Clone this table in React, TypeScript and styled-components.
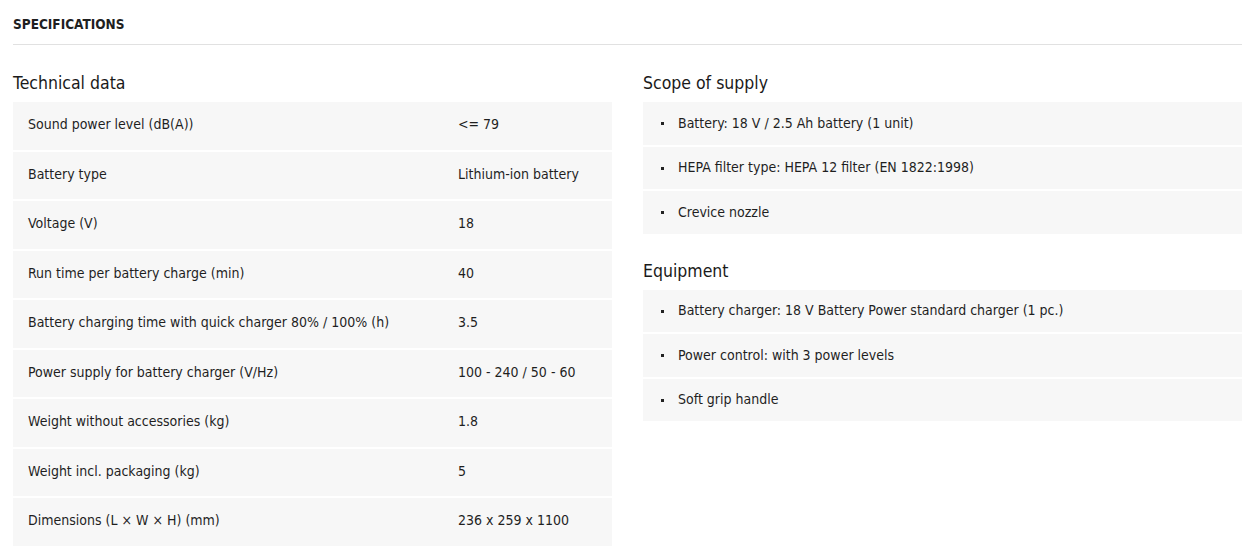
import React from "react";
import styled, { createGlobalStyle } from "styled-components";

const GlobalStyle = createGlobalStyle`
  body {
    margin: 0;
    background: #fff;
    font-family: "DejaVu Sans Condensed", "DejaVu Sans", sans-serif;
    color: #1f1f1f;
  }
`;

const Page = styled.div`
  padding: 0 10px 0 13px;
`;

const Header = styled.h1`
  margin: 0;
  height: 45px;
  display: flex;
  align-items: center;
  padding-top: 4px;
  box-sizing: border-box;
  font-size: 13.5px;
  font-weight: 700;
  border-bottom: 1px solid #e1e1e1;
`;

const Columns = styled.div`
  display: grid;
  grid-template-columns: 599px 599px;
  column-gap: 31px;
`;

const Column = styled.div`
  display: flex;
  flex-direction: column;
`;

const SectionTitle = styled.h2<{ $height?: number }>`
  margin: 0;
  height: ${(p) => p.$height ?? 57}px;
  display: flex;
  align-items: flex-end;
  padding-bottom: 9px;
  box-sizing: border-box;
  font-size: 17.5px;
  font-weight: 400;
  color: #1a1a1a;
`;

const Table = styled.div`
  display: flex;
  flex-direction: column;
`;

const Row = styled.div`
  display: grid;
  grid-template-columns: 430px 1fr;
  align-items: center;
  height: 47.5px;
  background: #f7f7f7;
  font-size: 14px;
  & + & {
    border-top: 2px solid #fff;
  }
`;

const Cell = styled.div`
  padding: 0 15px 3px;
`;

const List = styled.ul`
  list-style: none;
  margin: 0;
  padding: 0;
`;

const Item = styled.li`
  display: flex;
  align-items: center;
  height: 42.5px;
  padding-left: 18px;
  padding-bottom: 1px;
  box-sizing: border-box;
  background: #f7f7f7;
  font-size: 14px;
  & + & {
    border-top: 2px solid #fff;
    height: 44.5px;
  }
  &::before {
    content: "";
    width: 3px;
    height: 3px;
    background: #222;
    margin-right: 14px;
    margin-top: 2px;
  }
`;

const technical: [string, string][] = [
  ["Sound power level (dB(A))", "<= 79"],
  ["Battery type", "Lithium-ion battery"],
  ["Voltage (V)", "18"],
  ["Run time per battery charge (min)", "40"],
  ["Battery charging time with quick charger 80% / 100% (h)", "3.5"],
  ["Power supply for battery charger (V/Hz)", "100 - 240 / 50 - 60"],
  ["Weight without accessories (kg)", "1.8"],
  ["Weight incl. packaging (kg)", "5"],
  ["Dimensions (L × W × H) (mm)", "236 x 259 x 1100"],
];

const scope = [
  "Battery: 18 V / 2.5 Ah battery (1 unit)",
  "HEPA filter type: HEPA 12 filter (EN 1822:1998)",
  "Crevice nozzle",
];

const equipment = [
  "Battery charger: 18 V Battery Power standard charger (1 pc.)",
  "Power control: with 3 power levels",
  "Soft grip handle",
];

const App: React.FC = () => {
  return (
    <Page>
      <GlobalStyle />
      <Header>SPECIFICATIONS</Header>
      <Columns>
        <Column>
          <SectionTitle>Technical data</SectionTitle>
          <Table>
            {technical.map(([label, value]) => (
              <Row key={label}>
                <Cell>{label}</Cell>
                <Cell>{value}</Cell>
              </Row>
            ))}
          </Table>
        </Column>
        <Column>
          <SectionTitle>Scope of supply</SectionTitle>
          <List>
            {scope.map((s) => (
              <Item key={s}>{s}</Item>
            ))}
          </List>
          <SectionTitle $height={56}>Equipment</SectionTitle>
          <List>
            {equipment.map((s) => (
              <Item key={s}>{s}</Item>
            ))}
          </List>
        </Column>
      </Columns>
    </Page>
  );
};

export default App;
